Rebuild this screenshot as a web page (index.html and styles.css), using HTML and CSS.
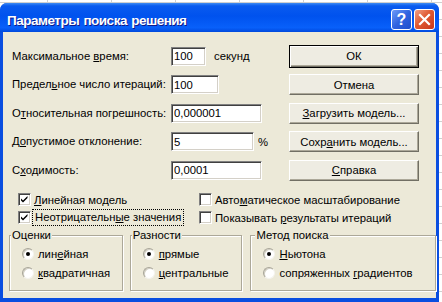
FILE: index.html
```html
<!DOCTYPE html>
<html><head>
<title>Параметры поиска решения</title>
<meta charset="utf-8">
<link rel="stylesheet" href="styles.css">
</head><body>
<div class="window">
<div class="titlebar">
<span class="title">Параметры поиска решения</span>
<span class="tb-btn tb-help">?</span>
<span class="tb-btn tb-close"><svg width="19" height="19" viewBox="0 0 19 19"><path d="M5 5 L14 14 M14 5 L5 14" stroke="#fff" stroke-width="2.2" stroke-linecap="square"/></svg></span>
</div>
<div class="client">
<div class="params">
<span class="lbl">Максимальное <u>в</u>ремя:</span>
<span class="field"><input class="edit w35" type="text" value="100"><span class="unit">секунд</span></span>
<button class="btn btn-default" type="button">ОК</button>

<span class="lbl">Предел<u>ь</u>ное число итераций:</span>
<span class="field"><input class="edit w48" type="text" value="100"></span>
<button class="btn" type="button">Отмена</button>

<span class="lbl">О<u>т</u>носительная погрешность:</span>
<span class="field"><input class="edit w91" type="text" value="0,000001"></span>
<button class="btn" type="button"><u>З</u>агрузить модель...</button>

<span class="lbl">Д<u>о</u>пустимое отклонение:</span>
<span class="field"><input class="edit w83" type="text" value="5"><span class="unit pct">%</span></span>
<button class="btn" type="button">Сохр<u>а</u>нить модель...</button>

<span class="lbl">С<u>х</u>одимость:</span>
<span class="field"><input class="edit w91" type="text" value="0,0001"></span>
<button class="btn" type="button"><u>С</u>правка</button>
</div>

<div class="checks">
<label class="chk"><span class="box on"></span><span><u>Л</u>инейная модель</span></label>
<label class="chk"><span class="box"></span><span>Авто<u>м</u>атическое масштабирование</span></label>
<label class="chk"><span class="box on"></span><span class="focus">Неотрицательн<u>ы</u>е значения</span></label>
<label class="chk"><span class="box"></span><span>Показывать <u>р</u>езультаты итераций</span></label>
</div>

<div class="groups">
<fieldset class="group g1">
<legend>Оценки</legend>
<label class="opt"><span class="rb on"></span><span>лин<u>е</u>йная</span></label>
<label class="opt"><span class="rb"></span><span><u>к</u>вадратичная</span></label>
</fieldset>
<fieldset class="group g2">
<legend>Разности</legend>
<label class="opt"><span class="rb on"></span><span><u>п</u>рямые</span></label>
<label class="opt"><span class="rb"></span><span><u>ц</u>ентральные</span></label>
</fieldset>
<fieldset class="group g3">
<legend>Метод поиска</legend>
<label class="opt"><span class="rb on"></span><span><u>Н</u>ьютона</span></label>
<label class="opt"><span class="rb"></span><span>сопряженных <u>г</u>радиентов</span></label>
</fieldset>
</div>
</div>
</div>
</body></html>
```

FILE: styles.css
```css
body { margin: 0; width: 442px; height: 302px; overflow: hidden; background-color: #fff; background-image: linear-gradient(90deg, #d0d0d0 1px, transparent 1px), linear-gradient(#d0d0d0 1px, transparent 1px); background-size: 64px 100%, 100% 17px; background-position: 47px 0, 0 2px; font-family: "Liberation Sans", Arial, sans-serif; font-size: 11.3px; color: #000; }
u { text-decoration: underline; text-underline-offset: 1px; }

.window { margin-top: 3px; width: 439px; padding-bottom: 4px; background: #0A4EE0; border-radius: 7px 7px 0 0; }
.titlebar { height: 29px; display: flex; align-items: flex-start; padding: 0 4px 0 7px; box-sizing: border-box; border-radius: 7px 7px 0 0; background: linear-gradient(180deg, #3F8CF3 0%, #0A5BEF 10%, #0052EE 45%, #0860FA 85%, #0049DD 100%); }
.title { flex: 1; color: #fff; font-weight: bold; font-size: 13.5px; letter-spacing: -0.5px; word-spacing: 1px; line-height: 16px; padding-top: 10px; text-shadow: 1px 1px #0F1A8A; white-space: nowrap; }
.tb-btn { width: 21px; height: 21px; margin-top: 6px; box-sizing: border-box; border: 1px solid #fff; border-radius: 3px; display: flex; align-items: center; justify-content: center; color: #fff; }
.tb-help { background: linear-gradient(135deg, #6E9CF8 0%, #2F63E0 50%, #1F4FCB 100%); font-weight: bold; font-size: 16px; line-height: 19px; }
.tb-close { margin-left: 2px; background: linear-gradient(135deg, #F0A088 0%, #E05A32 45%, #C8361A 100%); }

.client { margin: 0 3px; height: 266px; box-sizing: border-box; padding: 10px 0 0 6px; background: #ECE9D8; white-space: nowrap; }

.params { display: grid; grid-template-columns: 159px 118px 130px; grid-auto-rows: 28.5px; align-items: center; padding-left: 3px; }
.lbl { line-height: 13px; }
.field { display: flex; align-items: center; }
.edit { height: 19px; margin: 0; padding: 0 0 0 2px; box-sizing: border-box; border: 1px solid; border-color: #808080 #fff #fff #808080; box-shadow: inset 1px 1px #404040, inset -1px -1px #D4D0C8; background: #fff; font: inherit; color: #000; outline: none; }
.w35 { width: 35px; }
.w48 { width: 48px; }
.w83 { width: 83px; }
.w91 { width: 91px; }
.unit { margin-left: 8px; }
.pct { margin-left: 4px; }
.btn { width: 130px; height: 21px; margin: 0; padding: 0; box-sizing: border-box; border: 1px solid; border-color: #fff #716F64 #716F64 #fff; box-shadow: inset -1px -1px #ACA899; background: #EEECE2; font: inherit; color: #000; }
.btn-default { height: 23px; border: 1px solid #000; box-shadow: inset 1px 1px #fff, inset -1px -1px #716F64, inset -2px -2px #ACA899; }

.checks { display: grid; grid-template-columns: 181px auto; grid-auto-rows: 18px; align-items: center; padding-left: 9px; margin-top: 6px; }
.chk { display: flex; align-items: center; gap: 3px; }
.box { width: 13px; height: 13px; box-sizing: border-box; border: 1px solid; border-color: #808080 #fff #fff #808080; box-shadow: inset 1px 1px #404040, inset -1px -1px #D4D0C8; background: #fff; }
.box.on { background: #fff url("data:image/svg+xml,%3Csvg xmlns='http://www.w3.org/2000/svg' width='11' height='11'%3E%3Cpath d='M2 4.5 L4 6.5 L8.5 2 L8.5 4 L4 8.5 L2 6.5 Z' fill='%23000'/%3E%3C/svg%3E") center / 11px 11px no-repeat; }
.focus { outline: 1px dotted #000; outline-offset: 1px; padding: 0 1px; line-height: 13px; }

.groups { display: flex; gap: 7px; margin-top: 2px; }
.group { margin: 0; padding: 3px 0 7px; min-width: 0; border: 1px solid #ACA899; box-shadow: inset 1px 1px #fff, 1px 1px #fff; }
.g1 { width: 112px; }
.g2 { width: 111px; }
.g3 { width: 184px; margin-left: 1px; }
.group legend { padding: 0 1px; margin-left: 1px; line-height: 13px; background: #ECE9D8; }
.g3 legend { margin-left: 4px; }
.opt { display: flex; align-items: center; gap: 4px; height: 19px; padding-left: 12px; }
.rb { width: 12px; height: 12px; box-sizing: border-box; border-radius: 50%; border: 1px solid; border-color: #A7A497 #F4F3EE #F4F3EE #A7A497; box-shadow: inset 1px 1px #D2CFC2; background: #fff; display: flex; align-items: center; justify-content: center; }
.rb.on::after { content: ""; width: 4px; height: 4px; border-radius: 50%; background: #000; }
```
